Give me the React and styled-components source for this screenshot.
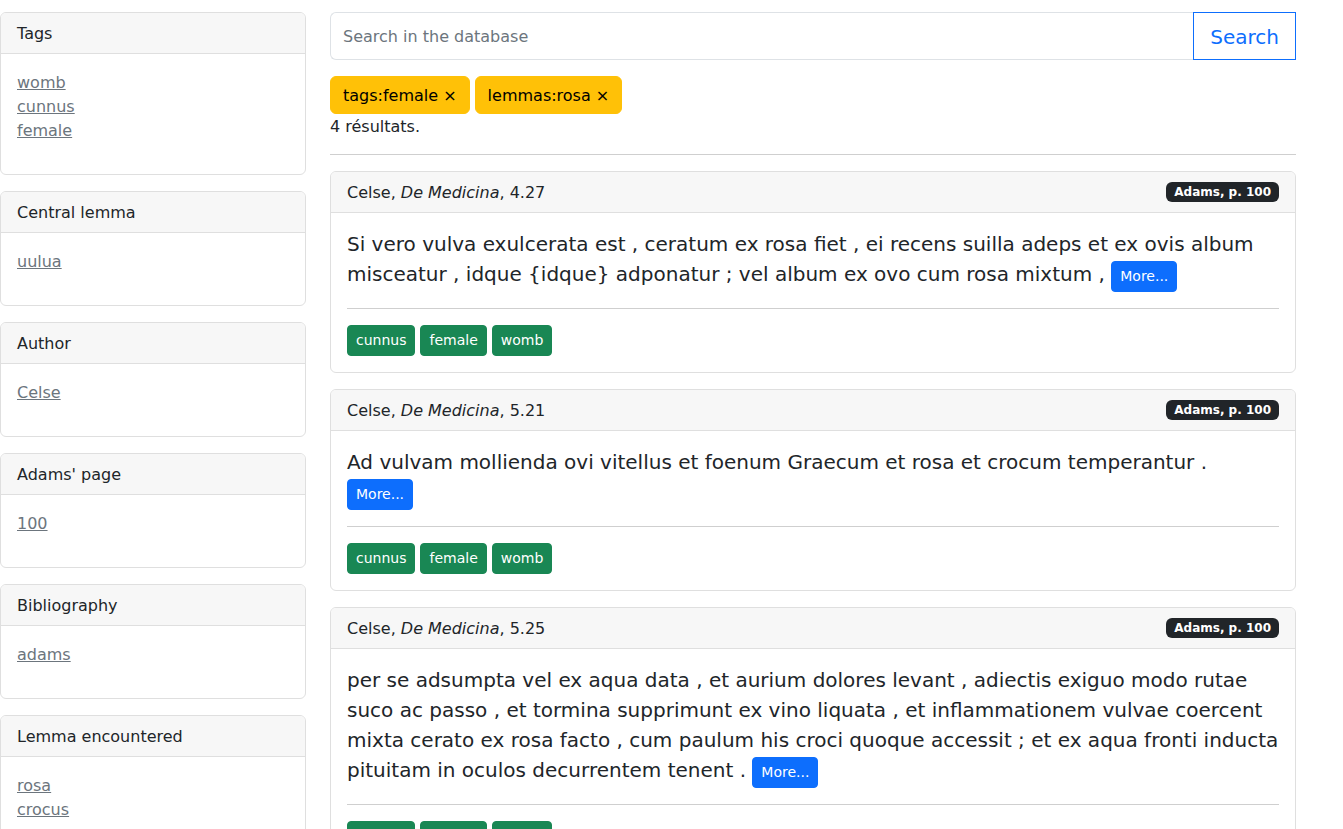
import styled, { createGlobalStyle } from "styled-components"

const Global = createGlobalStyle`
  body {
    margin: 0;
    font-family: "DejaVu Sans", "Liberation Sans", sans-serif;
    font-size: 16px;
    line-height: 1.5;
    color: #212529;
    background: #fff;
  }
  * { box-sizing: border-box; }
`

const Page = styled.div`
  display: flex;
  gap: 24px;
  padding: 12px 47px 0 0;
`

const Sidebar = styled.aside`
  width: 306px;
  flex-shrink: 0;
  display: flex;
  flex-direction: column;
  gap: 16px;
`

const Main = styled.main`
  flex: 1;
  min-width: 0;
`

const Card = styled.div`
  border: 1px solid #dfdfdf;
  border-radius: 6px;
  background: #fff;
  overflow: hidden;
`

const CardHeader = styled.div`
  display: flex;
  align-items: center;
  justify-content: space-between;
  padding: 9px 16px 7px;
  background: #f7f7f7;
  border-bottom: 1px solid #dfdfdf;
`

const CardBody = styled.div`
  padding: 16px;
`

const LinkList = styled.ul`
  list-style: none;
  margin: 0 0 15px;
  padding: 1px 0 0;
`

const FacetLink = styled.a`
  color: #6c757d;
  text-decoration: underline;
`

const SearchGroup = styled.div`
  display: flex;
  height: 48px;
`

const SearchInput = styled.input`
  flex: 1;
  border: 1px solid #dee2e6;
  border-right: none;
  border-radius: 6px 0 0 6px;
  padding: 7px 12px 5px;
  font: inherit;
  font-size: 16px;
  color: #212529;
  outline: none;
  &::placeholder { color: #6c757d; }
`

const SearchButton = styled.button`
  border: 1px solid #0d6efd;
  background: #fff;
  color: #0d6efd;
  font: inherit;
  font-size: 20px;
  padding: 9px 16px 7px;
  border-radius: 0;
`

const Filters = styled.div`
  display: flex;
  gap: 5px;
  margin-top: 16px;
`

const FilterButton = styled.button`
  background: #ffc107;
  border: 1px solid #ffc107;
  border-radius: 6px;
  color: #000;
  font: inherit;
  padding: 7px 12px 5px;
`

const Count = styled.div`
  padding-top: 1px;
  margin-bottom: -1px;
`

const Rule = styled.hr`
  border: none;
  border-top: 1px solid #cfcfcf;
  margin: 16px 0;
`

const Results = styled.div`
  display: flex;
  flex-direction: column;
  gap: 16px;
`

const Badge = styled.span`
  background: #212529;
  color: #fff;
  font-size: 12px;
  font-weight: 700;
  line-height: 1;
  padding: 4px 8px;
  border-radius: 6px;
  margin-top: -2px;
`

const Passage = styled.div`
  font-size: 20px;
  line-height: 1.5;
`

const SmallButton = styled.button`
  display: inline-block;
  font: inherit;
  font-size: 14px;
  line-height: 1.5;
  padding: 4px 8px;
  border-radius: 4px;
  border: 1px solid ${p => p.$bg};
  background: ${p => p.$bg};
  color: #fff;
`

const TagRow = styled.div`
  display: flex;
  gap: 5px;
`

const facets = [
  { title: "Tags", items: ["womb", "cunnus", "female"] },
  { title: "Central lemma", items: ["uulua"] },
  { title: "Author", items: ["Celse"] },
  { title: "Adams' page", items: ["100"] },
  { title: "Bibliography", items: ["adams"] },
  { title: "Lemma encountered", items: ["rosa", "crocus"] },
]

const results = [
  {
    ref: "4.27",
    text: "Si vero vulva exulcerata est , ceratum ex rosa fiet , ei recens suilla adeps et ex ovis album misceatur , idque {idque} adponatur ; vel album ex ovo cum rosa mixtum ,",
  },
  {
    ref: "5.21",
    text: "Ad vulvam mollienda ovi vitellus et foenum Graecum et rosa et crocum temperantur .",
  },
  {
    ref: "5.25",
    text: "per se adsumpta vel ex aqua data , et aurium dolores levant , adiectis exiguo modo rutae suco ac passo , et tormina supprimunt ex vino liquata , et inflammationem vulvae coercent mixta cerato ex rosa facto , cum paulum his croci quoque accessit ; et ex aqua fronti inducta pituitam in oculos decurrentem tenent .",
  },
  {
    ref: "6.18",
    text: "Vulvae rosa et crocum adhibentur .",
  },
]

export default function App() {
  return (
    <>
      <Global />
      <Page>
        <Sidebar>
          {facets.map(f => (
            <Card key={f.title}>
              <CardHeader>{f.title}</CardHeader>
              <CardBody>
                <LinkList>
                  {f.items.map(i => (
                    <li key={i}>
                      <FacetLink href="#">{i}</FacetLink>
                    </li>
                  ))}
                </LinkList>
              </CardBody>
            </Card>
          ))}
        </Sidebar>
        <Main>
          <SearchGroup>
            <SearchInput placeholder="Search in the database" />
            <SearchButton>Search</SearchButton>
          </SearchGroup>
          <Filters>
            <FilterButton>tags:female ×</FilterButton>
            <FilterButton>lemmas:rosa ×</FilterButton>
          </Filters>
          <Count>4 résultats.</Count>
          <Rule />
          <Results>
            {results.map(r => (
              <Card key={r.ref}>
                <CardHeader>
                  <span>
                    Celse, <i>De Medicina</i>, {r.ref}
                  </span>
                  <Badge>Adams, p. 100</Badge>
                </CardHeader>
                <CardBody>
                  <Passage>
                    {r.text} <SmallButton $bg="#0d6efd">More...</SmallButton>
                  </Passage>
                  <Rule />
                  <TagRow>
                    <SmallButton $bg="#198754">cunnus</SmallButton>
                    <SmallButton $bg="#198754">female</SmallButton>
                    <SmallButton $bg="#198754">womb</SmallButton>
                  </TagRow>
                </CardBody>
              </Card>
            ))}
          </Results>
        </Main>
      </Page>
    </>
  )
}
